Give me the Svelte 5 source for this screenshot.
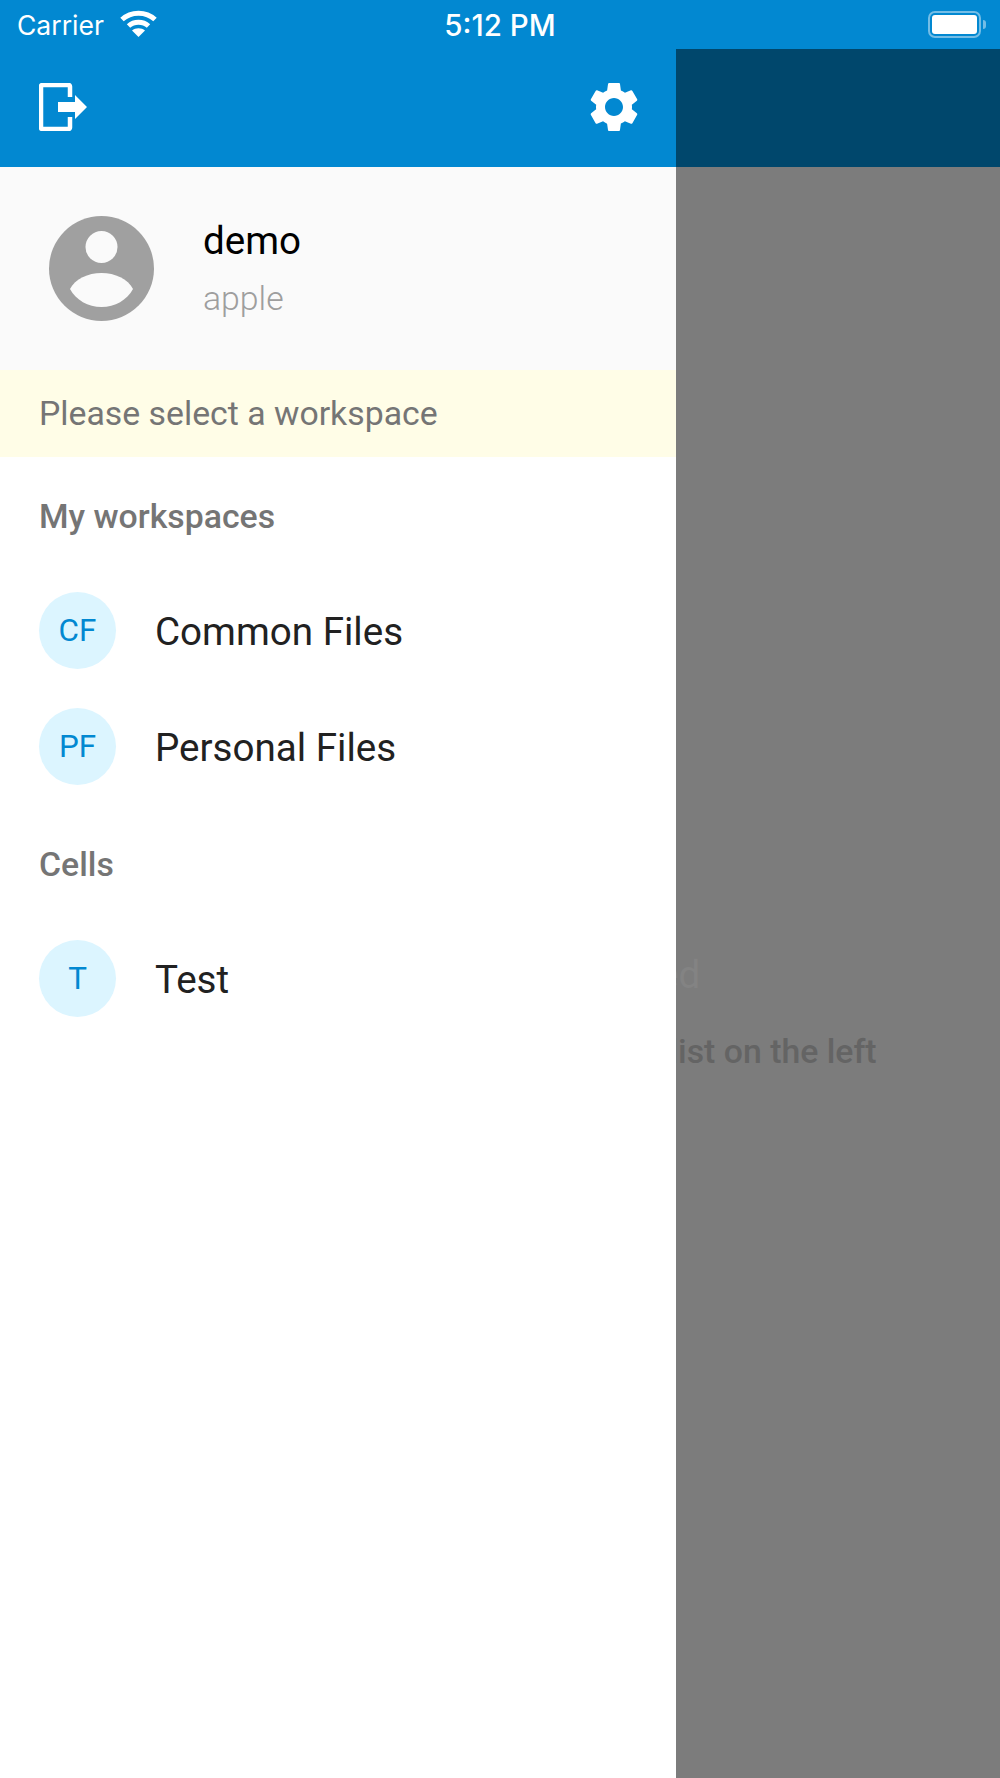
<script>
    const workspaces = [
        { initials: 'CF', label: 'Common Files' },
        { initials: 'PF', label: 'Personal Files' }
    ];
    const cells = [{ initials: 'T', label: 'Test' }];
</script>

<div class="screen">
    <div class="status">
        <div class="status-left">
            <span>Carrier</span>
            <svg class="wifi" viewBox="0 0 37 27" width="37" height="27">
                <path d="M2 9.5C11 1 26 1 35 9.5" />
                <path d="M8.5 16C14 11 23 11 28.5 16" />
                <path class="wedge" d="M18.5 27L12 20.6C15.5 17.4 21.5 17.4 25 20.6Z" />
            </svg>
        </div>
        <span class="time">5:12 PM</span>
        <div class="battery">
            <div class="battery-body"><div class="battery-fill"></div></div>
            <div class="battery-nub"></div>
        </div>
    </div>

    <div class="main">
        <div class="main-bar"></div>
        <div class="empty">
            <div class="empty-title">No workspace selected</div>
            <div class="empty-sub">Please select a workspace from the list on the left</div>
        </div>
    </div>

    <aside class="drawer">
        <div class="drawer-bar">
            <svg viewBox="0 0 48 48" width="48" height="48">
                <path class="door" d="M31 14V3.5a1.5 1.5 0 0 0-1.5-1.5H3.5A1.5 1.5 0 0 0 2 3.5v41A1.5 1.5 0 0 0 3.5 46h26a1.5 1.5 0 0 0 1.5-1.5V34" />
                <path class="arrow" d="M19 19H36V12L48 24L36 36V29H19Z" />
            </svg>
            <svg viewBox="0 0 24 24" width="60" height="60">
                <path class="gear" d="M19.14,12.94c0.04-0.3,0.06-0.61,0.06-0.94c0-0.32-0.02-0.64-0.07-0.94l2.03-1.58c0.18-0.14,0.23-0.41,0.12-0.61l-1.92-3.32c-0.12-0.22-0.37-0.29-0.59-0.22l-2.39,0.96c-0.5-0.38-1.03-0.7-1.62-0.94L14.4,2.81c-0.04-0.24-0.24-0.41-0.48-0.41h-3.84c-0.24,0-0.43,0.17-0.47,0.41L9.25,5.35C8.66,5.59,8.12,5.92,7.63,6.29L5.24,5.33c-0.22-0.08-0.47,0-0.59,0.22L2.74,8.87C2.62,9.08,2.66,9.34,2.86,9.48l2.03,1.58C4.84,11.36,4.8,11.69,4.8,12s0.02,0.64,0.07,0.94l-2.03,1.58c-0.18,0.14-0.23,0.41-0.12,0.61l1.92,3.32c0.12,0.22,0.37,0.29,0.59,0.22l2.39-0.96c0.5,0.38,1.03,0.7,1.62,0.94l0.36,2.54c0.05,0.24,0.24,0.41,0.48,0.41h3.84c0.24,0,0.44-0.17,0.47-0.41l0.36-2.54c0.59-0.24,1.13-0.56,1.62-0.94l2.39,0.96c0.22,0.08,0.47,0,0.59-0.22l1.92-3.32c0.12-0.22,0.07-0.47-0.12-0.61L19.14,12.94z M12,15.6c-1.98,0-3.6-1.62-3.6-3.6s1.62-3.6,3.6-3.6s3.6,1.62,3.6,3.6S13.98,15.6,12,15.6z" />
            </svg>
        </div>

        <div class="profile">
            <svg class="avatar" viewBox="0 0 105 105" width="105" height="105">
                <circle cx="52.5" cy="52.5" r="52.5" fill="#a0a0a0" />
                <circle cx="52.5" cy="31" r="16" fill="#fafafa" />
                <path d="M21 73C26 63 39 57 52.5 57S79 63 84 73C78 84 66 91 52.5 91S27 84 21 73Z" fill="#fafafa" />
            </svg>
            <div class="profile-text">
                <div class="profile-name">demo</div>
                <div class="profile-org">apple</div>
            </div>
        </div>

        <div class="notice">Please select a workspace</div>

        <div class="section">My workspaces</div>
        {#each workspaces as ws}
            <div class="row">
                <div class="badge">{ws.initials}</div>
                <span>{ws.label}</span>
            </div>
        {/each}

        <div class="section">Cells</div>
        {#each cells as ws}
            <div class="row">
                <div class="badge">{ws.initials}</div>
                <span>{ws.label}</span>
            </div>
        {/each}
    </aside>
</div>

<style>
    :global(body) {
        margin: 0;
    }

    .screen {
        position: relative;
        width: 1000px;
        height: 1778px;
        overflow: hidden;
        font-family: Roboto, "Liberation Sans", sans-serif;
        background-color: #7c7c7c;
    }

    .status {
        position: relative;
        z-index: 2;
        height: 49px;
        background-color: #0288d1;
        color: white;
        display: grid;
        grid-template-columns: 1fr auto 1fr;
        align-items: center;
        padding: 0 17px;
        box-sizing: border-box;
        font-family: Inter, sans-serif;
        font-size: 26.5px;
    }

    .status-left {
        display: flex;
        align-items: center;
        gap: 16px;
    }

    .wifi {
        margin-top: -3px;
    }

    .wifi path {
        fill: none;
        stroke: white;
        stroke-width: 5;
    }

    .wifi .wedge {
        fill: white;
        stroke: none;
    }

    .time {
        font-size: 29.5px;
        font-weight: 500;
    }

    .battery {
        justify-self: end;
        display: flex;
        align-items: center;
        gap: 2px;
        margin-right: -3px;
    }

    .battery-body {
        width: 53px;
        height: 27px;
        box-sizing: border-box;
        border: 2px solid rgba(255, 255, 255, 0.45);
        border-radius: 7px;
        padding: 2px;
    }

    .battery-fill {
        height: 100%;
        background-color: white;
        border-radius: 3px;
    }

    .battery-nub {
        width: 3px;
        height: 9px;
        background-color: rgba(255, 255, 255, 0.45);
        border-radius: 0 3px 3px 0;
    }

    .main-bar {
        height: 118px;
        background-color: #00476c;
    }

    .empty {
        text-align: center;
        padding-top: 783px;
        white-space: nowrap;
    }

    .empty-title {
        font-size: 38.6px;
        color: #838383;
        line-height: 50px;
    }

    .empty-sub {
        margin-top: 32px;
        font-size: 33.8px;
        font-weight: 500;
        color: #646464;
        line-height: 40px;
    }

    .drawer {
        position: absolute;
        top: 49px;
        left: 0;
        bottom: 0;
        width: 676px;
        background-color: white;
    }

    .drawer-bar {
        height: 118px;
        background-color: #0288d1;
        display: flex;
        align-items: center;
        justify-content: space-between;
        padding: 0 32px 2px 39px;
        box-sizing: border-box;
    }

    .door {
        fill: none;
        stroke: white;
        stroke-width: 4.5;
    }

    .arrow,
    .gear {
        fill: white;
    }

    .profile {
        height: 203px;
        background-color: #fafafa;
        display: flex;
        align-items: center;
        padding-left: 49px;
        gap: 49px;
    }

    .profile-text {
        margin-top: -2px;
    }

    .profile-name {
        font-size: 38.6px;
        color: black;
        line-height: 50px;
    }

    .profile-org {
        font-size: 33.8px;
        font-weight: 300;
        color: #9e9e9e;
        line-height: 42px;
        margin-top: 12px;
    }

    .notice {
        height: 86.5px;
        line-height: 88px;
        background-color: #fffde7;
        color: #757575;
        font-size: 33.8px;
        padding-left: 39px;
    }

    .section {
        height: 116px;
        box-sizing: border-box;
        padding-top: 4px;
        padding-left: 39px;
        display: flex;
        align-items: center;
        font-size: 33.8px;
        font-weight: 500;
        color: #757575;
    }

    .row {
        height: 116px;
        display: flex;
        align-items: center;
        padding-left: 39px;
        gap: 39px;
        font-size: 38.6px;
        color: #212121;
    }

    .row span {
        margin-top: 2px;
    }

    .badge {
        width: 77px;
        height: 77px;
        border-radius: 50%;
        background-color: #dcf5ff;
        color: #0288d1;
        display: flex;
        align-items: center;
        justify-content: center;
        font-size: 31.4px;
    }
</style>
